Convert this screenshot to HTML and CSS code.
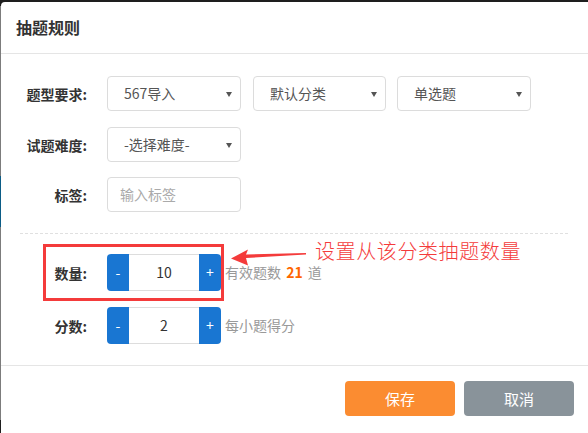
FILE: index.html
```html
<!DOCTYPE html>
<html lang="zh-CN">
<head>
<meta charset="utf-8">
<title>抽题规则</title>
<link rel="stylesheet" href="styles.css">
</head>
<body>
<div class="modal">
  <div class="modal-header">抽题规则</div>
  <div class="modal-body">
    <div class="form-row">
      <div class="label">题型要求:</div>
      <div class="controls">
        <div class="select"><span>567导入</span><i class="caret"></i></div>
        <div class="select"><span>默认分类</span><i class="caret"></i></div>
        <div class="select"><span>单选题</span><i class="caret"></i></div>
      </div>
    </div>
    <div class="form-row">
      <div class="label">试题难度:</div>
      <div class="controls">
        <div class="select"><span>-选择难度-</span><i class="caret"></i></div>
      </div>
    </div>
    <div class="form-row">
      <div class="label">标签:</div>
      <div class="controls">
        <div class="input placeholder">输入标签</div>
      </div>
    </div>
    <div class="divider"></div>
    <div class="step-row">
      <div class="label">数量:</div>
      <div class="stepper">
        <div class="step-btn minus">-</div>
        <div class="step-val">10</div>
        <div class="step-btn plus">+</div>
      </div>
      <div class="hint">有效题数 <b>21</b> 道</div>
    </div>
    <div class="step-row">
      <div class="label">分数:</div>
      <div class="stepper">
        <div class="step-btn minus">-</div>
        <div class="step-val">2</div>
        <div class="step-btn plus">+</div>
      </div>
      <div class="hint">每小题得分</div>
    </div>
  </div>
  <div class="modal-footer">
    <div class="btn btn-save">保存</div>
    <div class="btn btn-cancel">取消</div>
  </div>
  <div class="anno-box"></div>
  <svg class="anno-arrow" width="90" height="24" viewBox="0 0 90 24">
    <polygon points="0,10.5 17,1.5 15,6.5 75,5 75,6.5 15,10 17,17.5" fill="#f43b3b"/>
  </svg>
  <div class="anno-text">设置从该分类抽题数量</div>
</div>
</body>
</html>
```
FILE: styles.css
```css
html, body {
  margin: 0;
  padding: 0;
}
body {
  width: 588px;
  height: 433px;
  overflow: hidden;
  background:
    linear-gradient(to bottom, #1e1e1e 0, #1e1e1e 6px, #7c7c7c 6px, #7c7c7c 176px, #0b5c86 176px, #0b5c86 227px, #7c7c7c 227px, #7c7c7c 420px, #1e1e1e 420px) 0 0 / 1px 100% no-repeat,
    #1e1e1e;
  font-family: "Noto Sans CJK SC", "Noto Sans", sans-serif;
  font-size: 14px;
  color: #333;
}
.modal {
  position: relative;
  margin: 2px 0 0 1px;
  width: 587px;
  height: 431px;
  background: #fff;
  border-radius: 4px 0 0 0;
}
.modal-header {
  height: 51px;
  line-height: 51px;
  padding-left: 15px;
  font-size: 16px;
  font-weight: bold;
  color: #333;
  border-bottom: 1px solid #e5e5e5;
}
.modal-body {
  padding: 22px 0 21px 0;
}
.form-row {
  display: flex;
  align-items: center;
  height: 35px;
  margin-bottom: 16px;
}
.form-row:nth-child(2) {
  margin-bottom: 15px;
}
.label {
  width: 86px;
  margin-right: 20px;
  text-align: right;
  font-weight: bold;
  color: #333;
  font-size: 14px;
  flex: none;
}
.controls {
  display: flex;
  gap: 12px;
}
.select, .input {
  position: relative;
  box-sizing: border-box;
  width: 134px;
  height: 35px;
  border: 1px solid #dcdcdc;
  border-radius: 4px;
  padding-left: 16px;
  line-height: 33px;
  color: #555;
  font-size: 14px;
}
.select:nth-child(2) { width: 133px; margin-right: -1px; }
.input { padding-left: 12px; }
.placeholder { color: #aaa; }
.caret {
  position: absolute;
  right: 8px;
  top: 15px;
  width: 0;
  height: 0;
  border-left: 3px solid transparent;
  border-right: 3px solid transparent;
  border-top: 5px solid #555;
}
.divider {
  margin: 21px 20px 0 19px;
  border-top: 1px dashed #e0e0e0;
}
.step-row {
  display: flex;
  align-items: center;
  height: 37px;
  margin-top: 16px;
}
.divider + .step-row {
  margin-top: 20px;
}
.stepper {
  display: flex;
  height: 37px;
  flex: none;
}
.step-btn {
  width: 22px;
  background: #1976d2;
  color: #fff;
  text-align: center;
  line-height: 37px;
  font-size: 14px;
}
.step-btn.minus { border-radius: 4px 0 0 4px; }
.step-btn.plus { border-radius: 0 4px 4px 0; }
.step-val {
  box-sizing: border-box;
  width: 70px;
  border-top: 1px solid #ddd;
  border-bottom: 1px solid #ddd;
  text-align: center;
  line-height: 35px;
  color: #333;
  font-size: 14px;
}
.hint {
  margin-left: 4px;
  color: #999;
  font-size: 14px;
  line-height: 15px;
}
.hint b {
  color: #ff6600;
  font-weight: bold;
  margin: 0 2px;
}
.modal-footer {
  border-top: 1px solid #e5e5e5;
  display: flex;
  justify-content: flex-end;
  gap: 9px;
  padding: 15px 14px 0 0;
}
.btn {
  width: 110px;
  height: 35px;
  line-height: 35px;
  text-align: center;
  color: #fff;
  font-size: 15px;
  border-radius: 4px;
}
.btn-save { background: #fb8c31; }
.btn-cancel { background: #89939a; }
.anno-box {
  position: absolute;
  left: 42px;
  top: 242px;
  width: 175px;
  height: 51px;
  border: 3px solid #f43b3b;
}
.anno-arrow {
  position: absolute;
  left: 230px;
  top: 246px;
}
.anno-text {
  position: absolute;
  left: 314px;
  top: 239px;
  font-size: 20px;
  line-height: 20px;
  letter-spacing: 0.6px;
  color: #f43b3b;
  font-weight: 300;
  white-space: nowrap;
}
```
